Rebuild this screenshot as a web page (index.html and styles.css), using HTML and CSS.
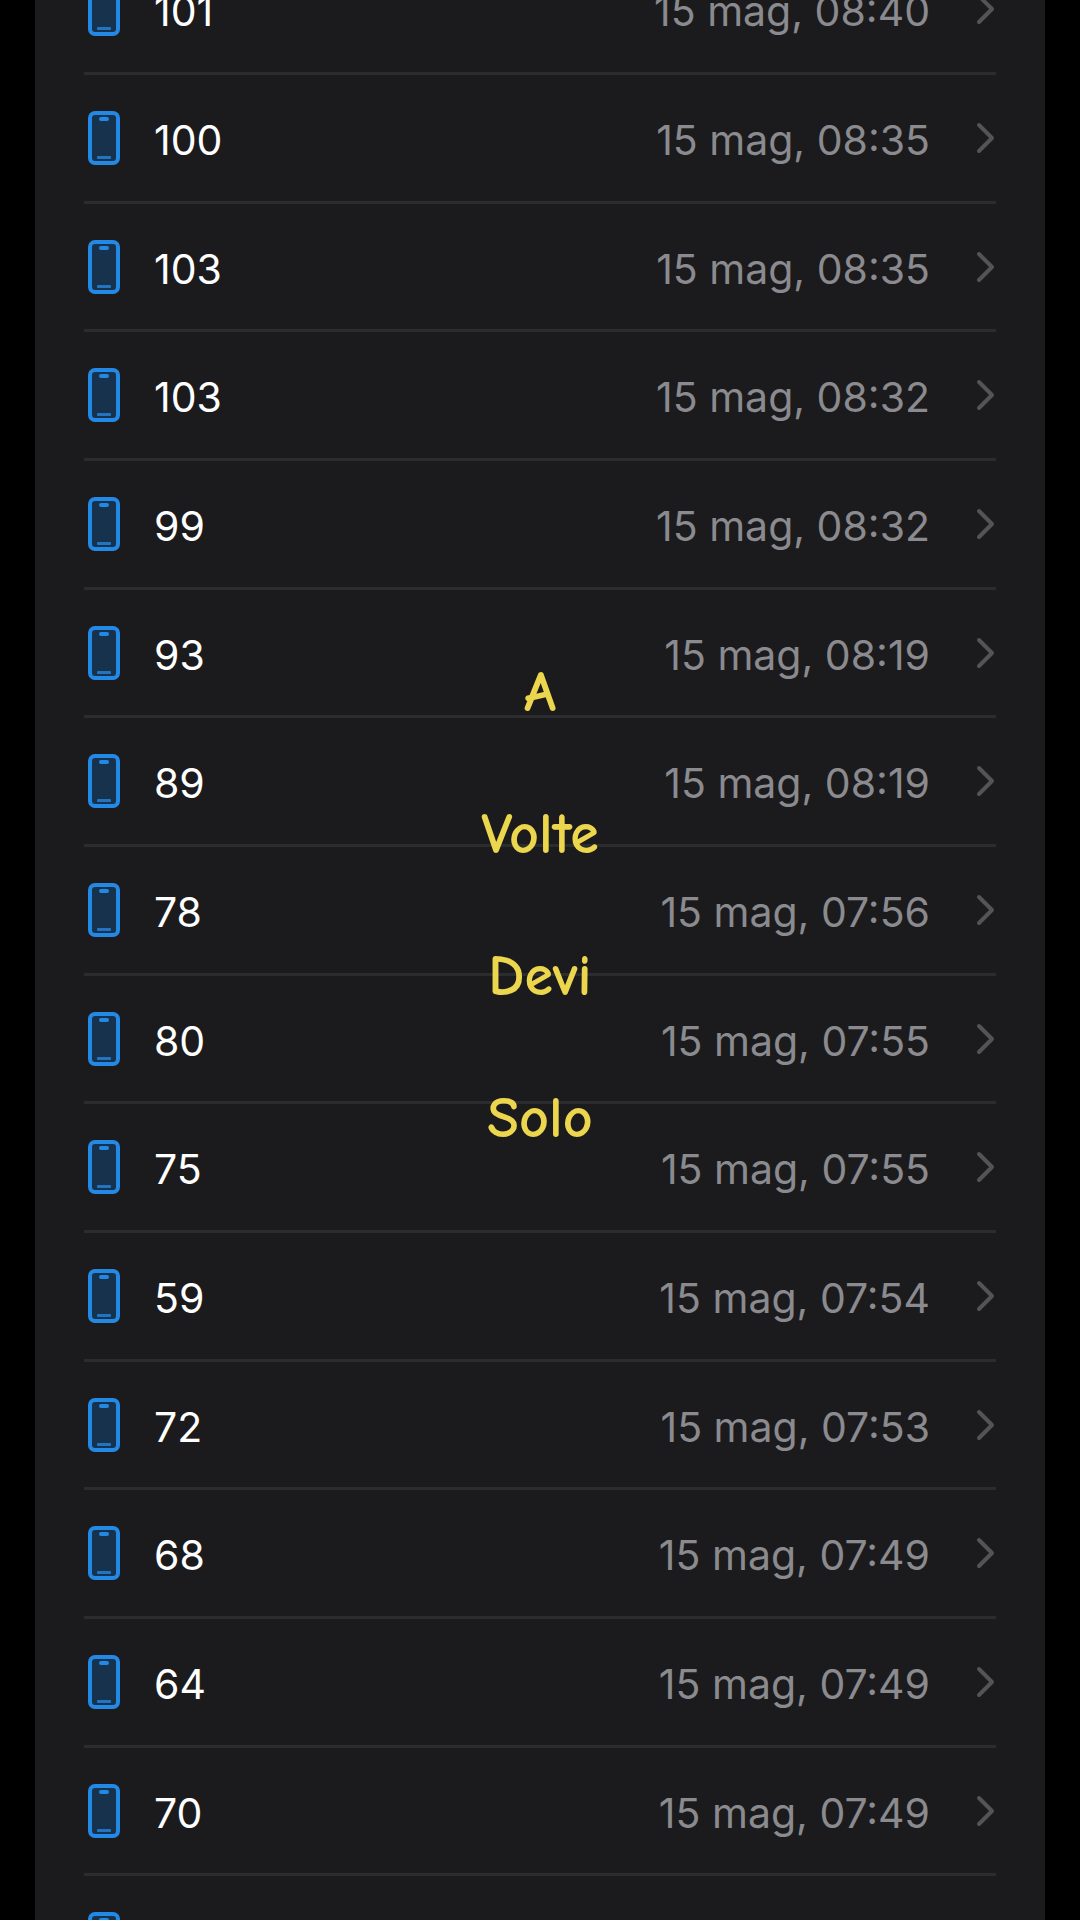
FILE: index.html
```html
<!DOCTYPE html>
<html lang="it">
<head>
    <meta charset="UTF-8">
    <meta name="viewport" content="width=device-width, initial-scale=1.0">
    <title>Misurazioni</title>
    <link rel="stylesheet" href="styles.css">
</head>
<body>
    <!-- Shared icons -->
    <svg class="sprite" width="0" height="0" aria-hidden="true">
        <symbol id="phone" viewBox="0 0 32 54">
            <rect x="2" y="2" width="28" height="50" rx="5" fill="#17324d" stroke="#2389e5" stroke-width="4"/>
            <rect x="11" y="6" width="10" height="4" rx="2" fill="#2389e5"/>
            <rect x="9" y="45" width="14" height="3" rx="1" fill="#2175c2"/>
        </symbol>
        <symbol id="chevron" viewBox="0 0 20 32">
            <path d="M3,3 L16,16 L3,29" fill="none" stroke="#545456" stroke-width="4" stroke-linecap="round" stroke-linejoin="round"/>
        </symbol>
    </svg>

    <main class="screen">
        <ul class="list">
            <li><a class="row" href="#"><svg class="phone"><use href="#phone"/></svg><span class="value">101</span><span class="date">15 mag, 08:40</span><svg class="chevron"><use href="#chevron"/></svg></a></li>
            <li><a class="row" href="#"><svg class="phone"><use href="#phone"/></svg><span class="value">100</span><span class="date">15 mag, 08:35</span><svg class="chevron"><use href="#chevron"/></svg></a></li>
            <li><a class="row" href="#"><svg class="phone"><use href="#phone"/></svg><span class="value">103</span><span class="date">15 mag, 08:35</span><svg class="chevron"><use href="#chevron"/></svg></a></li>
            <li><a class="row" href="#"><svg class="phone"><use href="#phone"/></svg><span class="value">103</span><span class="date">15 mag, 08:32</span><svg class="chevron"><use href="#chevron"/></svg></a></li>
            <li><a class="row" href="#"><svg class="phone"><use href="#phone"/></svg><span class="value">99</span><span class="date">15 mag, 08:32</span><svg class="chevron"><use href="#chevron"/></svg></a></li>
            <li><a class="row" href="#"><svg class="phone"><use href="#phone"/></svg><span class="value">93</span><span class="date">15 mag, 08:19</span><svg class="chevron"><use href="#chevron"/></svg></a></li>
            <li><a class="row" href="#"><svg class="phone"><use href="#phone"/></svg><span class="value">89</span><span class="date">15 mag, 08:19</span><svg class="chevron"><use href="#chevron"/></svg></a></li>
            <li><a class="row" href="#"><svg class="phone"><use href="#phone"/></svg><span class="value">78</span><span class="date">15 mag, 07:56</span><svg class="chevron"><use href="#chevron"/></svg></a></li>
            <li><a class="row" href="#"><svg class="phone"><use href="#phone"/></svg><span class="value">80</span><span class="date">15 mag, 07:55</span><svg class="chevron"><use href="#chevron"/></svg></a></li>
            <li><a class="row" href="#"><svg class="phone"><use href="#phone"/></svg><span class="value">75</span><span class="date">15 mag, 07:55</span><svg class="chevron"><use href="#chevron"/></svg></a></li>
            <li><a class="row" href="#"><svg class="phone"><use href="#phone"/></svg><span class="value">59</span><span class="date">15 mag, 07:54</span><svg class="chevron"><use href="#chevron"/></svg></a></li>
            <li><a class="row" href="#"><svg class="phone"><use href="#phone"/></svg><span class="value">72</span><span class="date">15 mag, 07:53</span><svg class="chevron"><use href="#chevron"/></svg></a></li>
            <li><a class="row" href="#"><svg class="phone"><use href="#phone"/></svg><span class="value">68</span><span class="date">15 mag, 07:49</span><svg class="chevron"><use href="#chevron"/></svg></a></li>
            <li><a class="row" href="#"><svg class="phone"><use href="#phone"/></svg><span class="value">64</span><span class="date">15 mag, 07:49</span><svg class="chevron"><use href="#chevron"/></svg></a></li>
            <li><a class="row" href="#"><svg class="phone"><use href="#phone"/></svg><span class="value">70</span><span class="date">15 mag, 07:49</span><svg class="chevron"><use href="#chevron"/></svg></a></li>
            <li><a class="row" href="#"><svg class="phone"><use href="#phone"/></svg></a></li>
        </ul>

        <!-- Caption over the list -->
        <div class="caption">
            <span>A</span>
            <span>Volte</span>
            <span>Devi</span>
            <span>Solo</span>
        </div>
    </main>
</body>
</html>
```
FILE: styles.css
```css
* {
    box-sizing: border-box;
}
body {
    margin: 0;
    background-color: #000;
    font-family: Inter, "Liberation Sans", sans-serif;
}
.sprite {
    position: absolute;
}
.screen {
    position: relative;
    height: 100vh;
    padding: 0 35px;
    overflow: hidden;
}
/* scrolled part way through the first row */
.list {
    margin: -54px 0 0;
    padding: 0 49px;
    list-style: none;
    background-color: #1b1b1d;
}
.row {
    display: flex;
    align-items: center;
    min-height: 129px;
    padding-left: 4px;
    border-bottom: 3px solid #2c2c2e;
    color: #fff;
    font-size: 41px;
    line-height: 52px;
    text-decoration: none;
}
li:nth-child(3n) .row {
    min-height: 128px;
}
.phone {
    width: 32px;
    height: 54px;
}
.value,
.date {
    padding-top: 4px;
}
.value {
    flex: 1;
    margin-left: 34px;
}
.date {
    color: #8a8a8f;
}
.chevron {
    width: 20px;
    height: 32px;
    margin-left: 46px;
}
.caption {
    position: absolute;
    top: 622px;
    left: 0;
    right: 0;
    display: flex;
    flex-direction: column;
    align-items: center;
    color: #ecd64e;
    font-family: "Comic Neue", Lato, sans-serif;
    font-size: 58px;
    font-weight: 700;
    line-height: 142px;
    pointer-events: none;
}
```
